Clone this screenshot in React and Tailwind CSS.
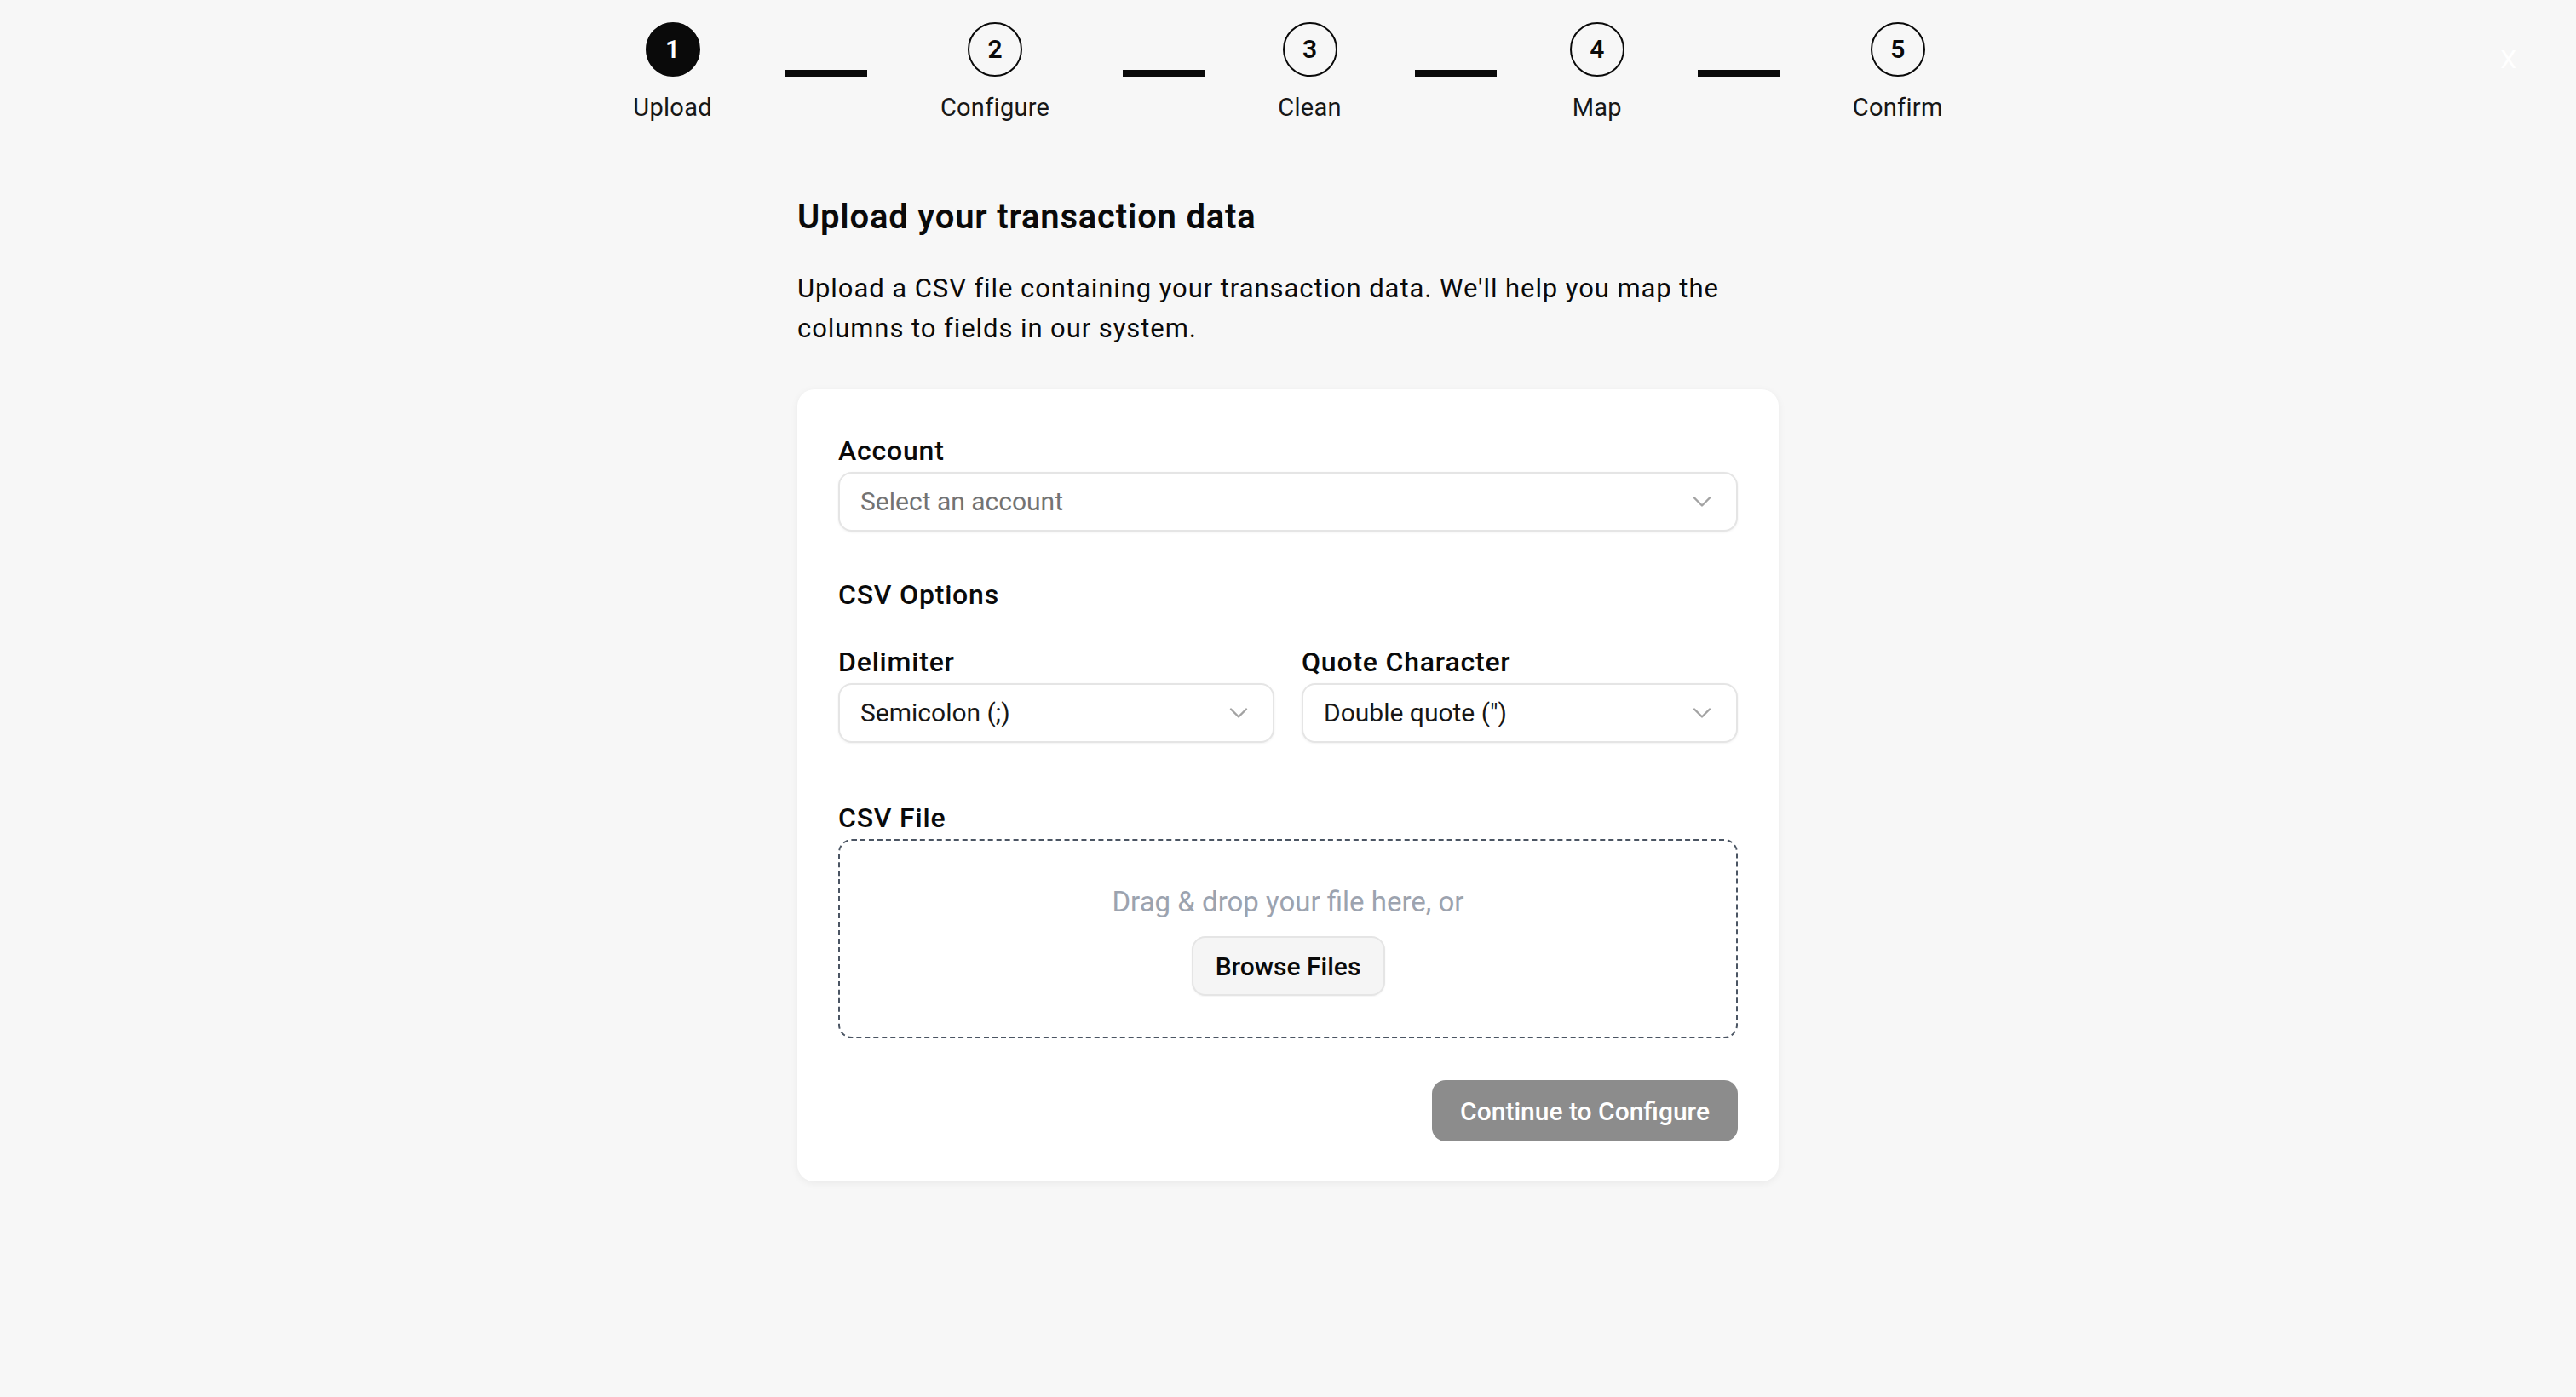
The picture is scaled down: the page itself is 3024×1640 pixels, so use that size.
import { ChevronDown } from 'lucide-react';

const STEPS = ['Upload', 'Configure', 'Clean', 'Map', 'Confirm'];

function Stepper({ current = 0 }) {
  return (
    <div className="flex items-center justify-center gap-[86px]">
      {STEPS.map((label, i) => (
        <div key={label} className="contents">
          {i > 0 ? <div className="h-[8px] w-[96px] bg-[#0a0a0a]" /> : null}
          <div className="flex flex-col items-center gap-[16px]">
            <div
              className={`flex h-[64px] w-[64px] items-center justify-center rounded-full border-[2px] border-[#0a0a0a] text-[30px] font-semibold leading-none ${
                i === current ? 'bg-[#0a0a0a] text-white' : 'text-[#0a0a0a]'
              }`}
            >
              {i + 1}
            </div>
            <span className="text-[29px] leading-[40px] tracking-[0.01em] text-[#171717]">{label}</span>
          </div>
        </div>
      ))}
    </div>
  );
}

function Select({ value, placeholder }) {
  return (
    <button
      type="button"
      className="flex h-[70px] w-full items-center justify-between rounded-[16px] border-[2px] border-[#e5e5e5] bg-white pl-[24px] pr-[22px] text-left shadow-[0_1px_3px_rgba(0,0,0,0.06)]"
    >
      <span className={`text-[30px] leading-[40px] ${value ? 'text-[#171717]' : 'text-[#737373]'}`}>
        {value || placeholder}
      </span>
      <ChevronDown size={36} strokeWidth={1.6} className="text-[#a3a3a3]" />
    </button>
  );
}

function Label({ children }) {
  return (
    <div className="mb-[5px] text-[32px] font-medium leading-[40px] tracking-[0.025em] text-[#0a0a0a]">{children}</div>
  );
}

export default function App() {
  return (
    <div className="relative min-h-[1640px] bg-[#f7f7f7] pt-[26px] font-['Roboto',sans-serif] text-[#0a0a0a]">
      <span className="absolute right-[70px] top-[50px] text-[30px] leading-[40px] text-white">X</span>

      <Stepper current={0} />

      <main className="mx-auto mt-[85px] w-[1152px]">
        <h1 className="text-[40px] font-semibold leading-[48px] tracking-[0.02em] text-[#0a0a0a]">
          Upload your transaction data
        </h1>
        <p className="mt-[36px] text-[31px] leading-[47px] tracking-[0.03em] text-[#0a0a0a]">
          Upload a CSV file containing your transaction data. We'll help you map the columns to fields in our system.
        </p>

        <div className="mt-[48px] rounded-[20px] bg-white px-[48px] pb-[47px] pt-[52px] shadow-[0_2px_10px_rgba(0,0,0,0.06)]">
          <Label>Account</Label>
          <Select placeholder="Select an account" />

          <h2 className="mt-[54px] text-[32px] font-medium leading-[40px] tracking-[0.025em]">CSV Options</h2>

          <div className="mt-[39px] grid grid-cols-2 gap-[32px]">
            <div>
              <Label>Delimiter</Label>
              <Select value="Semicolon (;)" />
            </div>
            <div>
              <Label>Quote Character</Label>
              <Select value='Double quote (")' />
            </div>
          </div>

          <div className="mt-[68px]">
            <Label>CSV File</Label>
            <div className="flex flex-col items-center rounded-[16px] border-[2px] border-dashed border-[#4b5563] pb-[48px] pt-[52px]">
              <p className="text-[33px] leading-[40px] text-[#9ca3af]">Drag &amp; drop your file here, or</p>
              <button
                type="button"
                className="mt-[20px] h-[70px] w-[227px] rounded-[16px] border-[2px] border-[#e5e5e5] bg-[#f5f5f5] text-[30px] font-medium text-[#0a0a0a] shadow-[0_1px_2px_rgba(0,0,0,0.05)]"
              >
                Browse Files
              </button>
            </div>
          </div>

          <div className="mt-[49px] flex justify-end">
            <button
              type="button"
              className="h-[72px] rounded-[16px] bg-[#8c8c8c] px-[33px] text-[30px] font-medium text-white"
            >
              Continue to Configure
            </button>
          </div>
        </div>
      </main>
    </div>
  );
}
